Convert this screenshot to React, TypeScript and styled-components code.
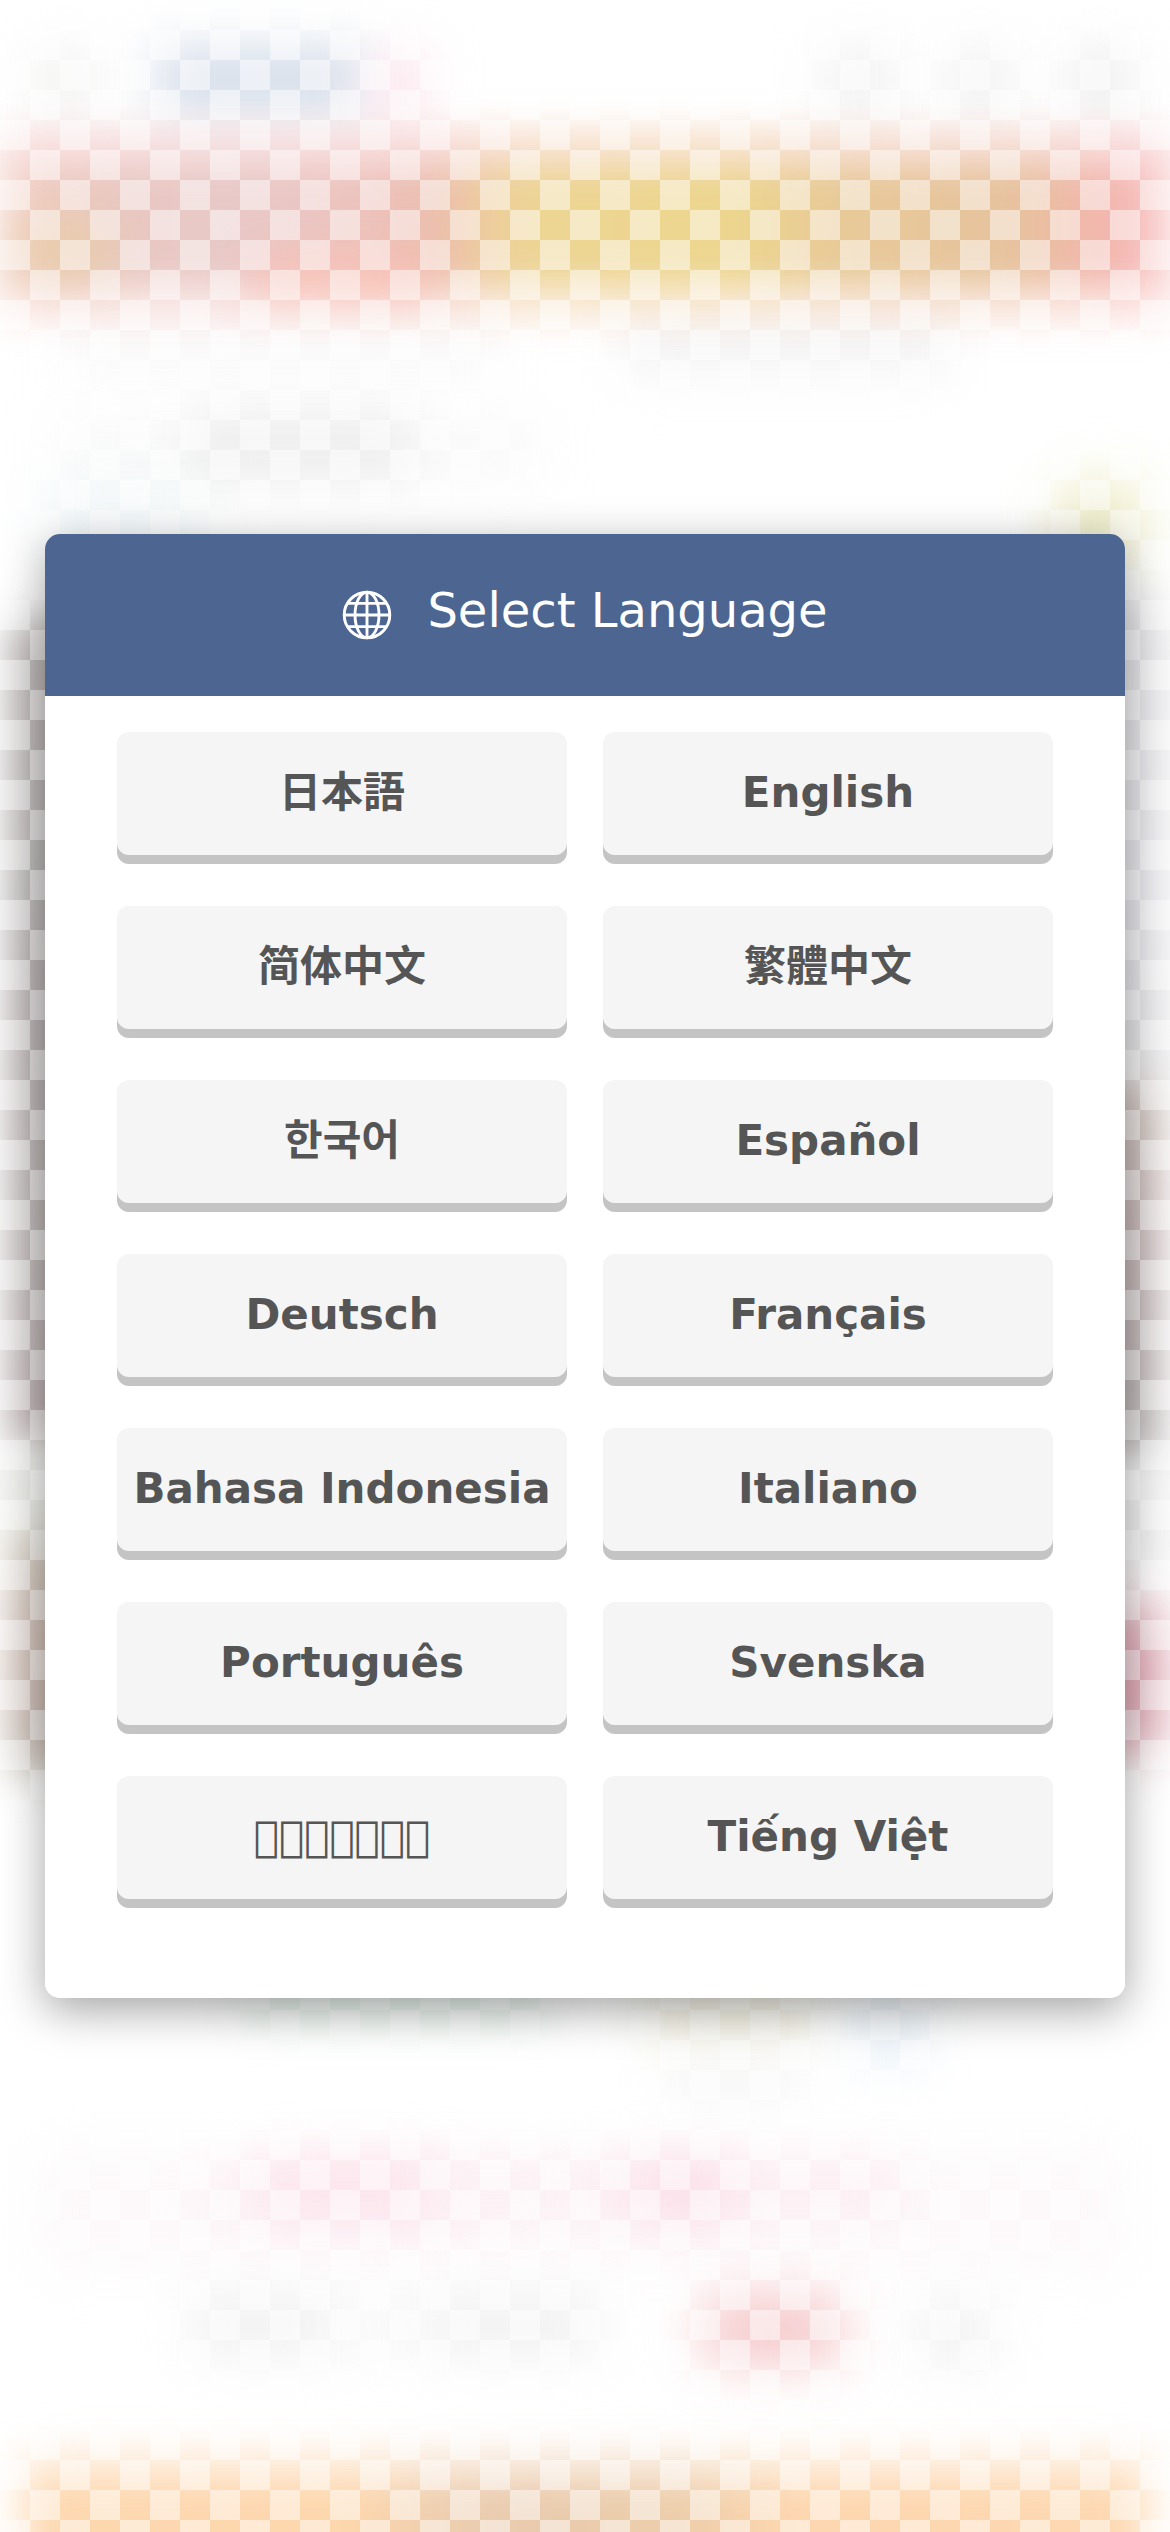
import React from "react";
import styled, { createGlobalStyle } from "styled-components";

const GlobalStyle = createGlobalStyle`
  html, body, #root { height: 100%; }
  body { margin: 0; background: #fff; overflow: hidden; }
  * { box-sizing: border-box; }
`;

const Screen = styled.main`
  position: relative;
  width: 100%;
  height: 2532px;
  display: flex;
  align-items: center;
  justify-content: center;
  overflow: hidden;
  background: #fff;
  font-family: "DejaVu Sans", "Noto Sans CJK JP", sans-serif;
`;

const Backdrop = styled.div`
  position: absolute;
  inset: 0;
  overflow: hidden;

  &::after {
    content: "";
    position: absolute;
    inset: 0;
    background: conic-gradient(
        transparent 25%,
        rgba(255, 255, 255, 0.48) 0 50%,
        transparent 0 75%,
        rgba(255, 255, 255, 0.48) 0
      )
      0 0 / 60px 60px;
  }
`;

type BlobProps = { $x: number; $y: number; $w: number; $h: number; $fill: string; $blur?: number };

const Blob = styled.div<BlobProps>`
  position: absolute;
  left: ${(p) => p.$x}px;
  top: ${(p) => p.$y}px;
  width: ${(p) => p.$w}px;
  height: ${(p) => p.$h}px;
  background: ${(p) => p.$fill};
  filter: blur(${(p) => p.$blur ?? 22}px);
`;

const Dialog = styled.section`
  position: relative;
  width: 1080px;
  height: 1464px;
  display: flex;
  flex-direction: column;
  border-radius: 15px;
  overflow: hidden;
  background: #fff;
`;

const DialogShadow = styled.div`
  position: relative;
  border-radius: 15px;
  box-shadow: 0 12px 45px rgba(0, 0, 0, 0.36);
`;

const Header = styled.header`
  flex: none;
  height: 162px;
  display: flex;
  justify-content: center;
  padding-top: 48px;
  background: #4d6691;
  color: #fff;
`;

const Title = styled.h1`
  margin: 0 0 0 35px;
  font-size: 48px;
  line-height: 56px;
  font-weight: 400;
`;

const Globe = styled.svg`
  width: 50px;
  height: 50px;
  margin-top: 8px;
  fill: none;
  stroke: currentColor;
  stroke-width: 2.9;
`;

const LanguageGrid = styled.div`
  display: grid;
  grid-template-columns: 450px 450px;
  grid-auto-rows: 123px;
  gap: 51px 36px;
  justify-content: center;
  padding-top: 36px;
`;

const LanguageButton = styled.button`
  display: flex;
  align-items: center;
  justify-content: center;
  padding: 0 0 1px;
  border: 0;
  border-radius: 12px;
  background: #f5f5f5;
  box-shadow: 0 9px 0 #c4c4c4;
  color: #555;
  font-family: inherit;
  font-size: 42px;
  line-height: 54px;
  font-weight: 700;
  white-space: nowrap;

  &:lang(zh-Hans) { font-family: "DejaVu Sans", "Noto Sans CJK SC", sans-serif; }
  &:lang(zh-Hant) { font-family: "DejaVu Sans", "Noto Sans CJK TC", sans-serif; }
  &:lang(ko) { font-family: "DejaVu Sans", "Noto Sans CJK KR", sans-serif; }
`;

const languages = [
  ["ja", "日本語"],
  ["en", "English"],
  ["zh-Hans", "简体中文"],
  ["zh-Hant", "繁體中文"],
  ["ko", "한국어"],
  ["es", "Español"],
  ["de", "Deutsch"],
  ["fr", "Français"],
  ["id", "Bahasa Indonesia"],
  ["it", "Italiano"],
  ["pt", "Português"],
  ["sv", "Svenska"],
  ["th", "\u{F0001}".repeat(7)],
  ["vi", "Tiếng Việt"],
];

type BlobRow = [number, number, number, number, string, number?];

const blobs: BlobRow[] = [
  [155, 46, 210, 68, "#d6deea", 25],
  [375, 55, 50, 60, "#fde0ea", 25],
  [30, 45, 70, 70, "#f5f5f4"],
  [820, 45, 80, 70, "#f4f4f4"],
  [945, 45, 70, 70, "#f3f3f3"],
  [1065, 45, 70, 70, "#f1f1f1"],
  [620, 310, 330, 65, "#f4f4f5", 25],
  [60, 320, 440, 60, "#fafafa"],
  [4, 147, 1162, 152, "linear-gradient(90deg, #f2cdc0 0, #e9c8c1 110px, #e8c9c8 230px, #edc4be 350px, #ecbdb0 430px, #edcb9f 475px, #edd594 520px, #edd68e 730px, #e8ca98 830px, #e7c29e 1020px, #f2b6ac 1090px, #f7bec0 1170px)", 23],
  [0, 130, 1170, 36, "rgba(250, 216, 220, 0.5)", 18],
  [0, 290, 1170, 34, "rgba(252, 226, 222, 0.45)", 18],
  [20, 222, 90, 55, "rgba(231, 205, 165, 0.8)"],
  [250, 257, 180, 40, "rgba(253, 190, 175, 0.7)"],
  [190, 418, 220, 58, "#ebebeb", 25],
  [60, 420, 480, 60, "rgba(242, 242, 242, 0.45)", 26],
  [40, 480, 160, 70, "rgba(230, 241, 246, 0.5)", 28],
  [1060, 484, 80, 80, "#ebe9bf", 28],
  [9, 622, 90, 825, "linear-gradient(#b5b1af, #b7afaf 12%, #b3b1af 30%, #b3aaab 45%, #b7b0af 75%, #b8aaac)", 20],
  [0, 1450, 80, 70, "#e6e8e3"],
  [9, 1525, 90, 250, "linear-gradient(#d4d1c4, #cbbab1 35%, #c7b5ad 75%, #cac7bb)", 20],
  [1090, 600, 74, 480, "linear-gradient(#e0e0e4, #e3e3e8 60%, #dfdfe2)"],
  [1080, 1080, 80, 382, "linear-gradient(#c8bdb6, #c1b0b1 40%, #b9b0b0 80%, #bdbbb9)", 20],
  [1095, 1470, 75, 100, "#ededed"],
  [1080, 1595, 84, 165, "linear-gradient(#e8ccd1, #dfa5b2 35%, #dea7b3 75%, #e6ccd0)", 22],
  [240, 1980, 310, 36, "#daece1", 24],
  [645, 1985, 165, 55, "#f2efdf", 24],
  [855, 1985, 70, 80, "#e8f1f8", 26],
  [665, 2065, 140, 32, "#f4f4f4"],
  [40, 2150, 1080, 120, "#fdf9fb", 24],
  [260, 2165, 180, 52, "#fcdde7", 26],
  [200, 2167, 330, 50, "rgba(253, 236, 242, 0.5)", 24],
  [420, 2163, 150, 55, "rgba(252, 240, 244, 0.8)"],
  [570, 2163, 330, 55, "#fcedf2", 24],
  [635, 2165, 95, 52, "#fbdde7", 26],
  [190, 2298, 150, 56, "#f0f0f0", 26],
  [340, 2298, 90, 56, "#f8f8f8", 24],
  [430, 2298, 170, 56, "#f0f0f0", 26],
  [915, 2303, 80, 60, "#f1f1f1", 26],
  [703, 2298, 140, 64, "#f4c3c5", 28],
  [25, 2466, 1120, 130, "linear-gradient(90deg, #fdd8b0 0, #fdd7ad 330px, #edceb0 420px, #e9cbae 500px, #edceab 660px, #fdd7af 760px, #fdd8b0)", 22],
  [25, 2452, 1120, 20, "rgba(253, 236, 222, 0.6)", 22],
];

export default function App() {
  return (
    <Screen>
      <GlobalStyle />
      <Backdrop>
        {blobs.map(([x, y, w, h, fill, blur], i) => (
          <Blob key={i} $x={x} $y={y} $w={w} $h={h} $fill={fill} $blur={blur} />
        ))}
      </Backdrop>
      <DialogShadow>
        <Dialog role="dialog">
          <Header>
            <Globe viewBox="0 0 50 50">
              <circle cx="25" cy="25" r="22.8" />
              <ellipse cx="25" cy="25" rx="12" ry="22.8" />
              <path d="M25 2v46M2 25h46M5.5 13.4h39M5.5 36.6h39" />
            </Globe>
            <Title>Select Language</Title>
          </Header>
          <LanguageGrid>
            {languages.map(([code, label]) => (
              <LanguageButton key={code} lang={code}>
                {label}
              </LanguageButton>
            ))}
          </LanguageGrid>
        </Dialog>
      </DialogShadow>
    </Screen>
  );
}
